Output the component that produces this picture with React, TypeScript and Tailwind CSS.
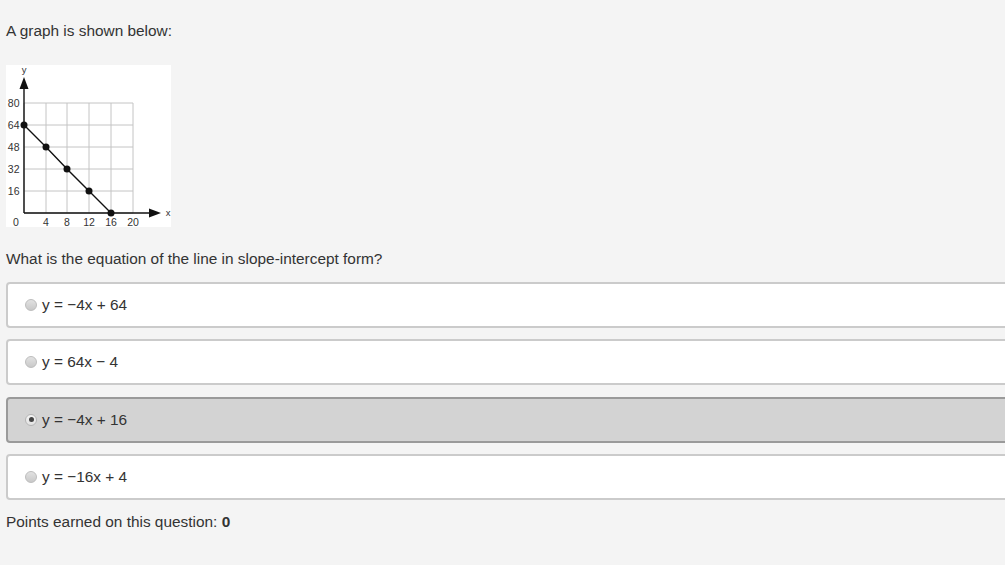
import React from 'react';

const options = [
  { label: 'y = −4x + 64', selected: false },
  { label: 'y = 64x − 4', selected: false },
  { label: 'y = −4x + 16', selected: true },
  { label: 'y = −16x + 4', selected: false },
];

function Graph() {
  const xs = [18, 40, 61, 83, 105, 127];
  const ys = [38, 60, 82, 104, 126, 148];
  const pts = [
    [18, 60],
    [40, 82],
    [61, 104],
    [83, 126],
    [105, 148],
  ];
  return (
    <svg width="165" height="162" viewBox="0 0 165 162" className="block bg-white">
      {/* grid */}
      {xs.map((x) => (
        <line key={'v' + x} x1={x} y1={38} x2={x} y2={148} stroke="#c4c4c4" strokeWidth="1" />
      ))}
      {ys.map((y) => (
        <line key={'h' + y} x1={18} y1={y} x2={127} y2={y} stroke="#c4c4c4" strokeWidth="1" />
      ))}
      {/* axes */}
      <line x1={18} y1={148} x2={18} y2={22} stroke="#111" strokeWidth="1.4" />
      <line x1={18} y1={148} x2={146} y2={148} stroke="#111" strokeWidth="1.4" />
      <polygon points="18,12 13.5,24 22.5,24" fill="#111" />
      <polygon points="155,148 143,143.5 143,152.5" fill="#111" />
      {/* line + points */}
      <polyline points={pts.map((p) => p.join(',')).join(' ')} fill="none" stroke="#111" strokeWidth="1.4" />
      {pts.map(([x, y]) => (
        <circle key={x} cx={x} cy={y} r="3.5" fill="#111" />
      ))}
      {/* labels */}
      <g fontFamily="'Liberation Sans', Arial, sans-serif" fontSize="10.5" fill="#333">
        <text x="18" y="8" textAnchor="middle" fontSize="9.5">y</text>
        <text x="162" y="151" textAnchor="middle" fontSize="9.5">x</text>
        {[['80', 38], ['64', 60], ['48', 82], ['32', 104], ['16', 126]].map(([t, y]) => (
          <text key={t as string} x="13.5" y={(y as number) + 3.8} textAnchor="end">
            {t}
          </text>
        ))}
        <text x="10" y="161" textAnchor="middle">0</text>
        {[['4', 40], ['8', 61], ['12', 83], ['16', 105], ['20', 127]].map(([t, x]) => (
          <text key={t as string} x={x as number} y="161" textAnchor="middle">
            {t}
          </text>
        ))}
      </g>
    </svg>
  );
}

function Radio({ checked }: { checked: boolean }) {
  if (checked) {
    return (
      <span className="w-[12px] h-[12px] rounded-full border border-[#b5b5b5] bg-gradient-to-b from-[#f4f4f4] to-[#e2e2e2] flex items-center justify-center shrink-0">
        <span className="w-[5px] h-[5px] rounded-full bg-[#444]" />
      </span>
    );
  }
  return (
    <span className="w-[12px] h-[12px] rounded-full border border-[#bdbdbd] bg-gradient-to-b from-[#e2e2e2] to-[#c9c9c9] shrink-0" />
  );
}

export default function App() {
  return (
    <div
      className="w-[1005px] h-[565px] overflow-hidden bg-[#f4f4f4] text-[#333] text-[15.4px] leading-[22px] pl-[6px] pt-[20px]"
      style={{ fontFamily: "'Liberation Sans', Arial, sans-serif" }}
    >
      <p>A graph is shown below:</p>

      <div className="mt-[23px]">
        <Graph />
      </div>

      <p className="mt-[21px]">What is the equation of the line in slope-intercept form?</p>

      <div className="mt-[12px] flex flex-col gap-[11.3px] w-[1030px]">
        {options.map((o) => (
          <div
            key={o.label}
            className={
              o.selected
                ? 'h-[46px] flex items-center gap-[5px] pl-[17px] border-2 border-[#9a9a9a] rounded-[4px] bg-[#d3d3d3]'
                : 'h-[46px] flex items-center gap-[5px] pl-[17px] border-2 border-[#cbcbcb] rounded-[4px] bg-white'
            }
          >
            <Radio checked={o.selected} />
            <span>{o.label}</span>
          </div>
        ))}
      </div>

      <p className="mt-[11px]">
        Points earned on this question: <span className="font-bold">0</span>
      </p>
    </div>
  );
}
